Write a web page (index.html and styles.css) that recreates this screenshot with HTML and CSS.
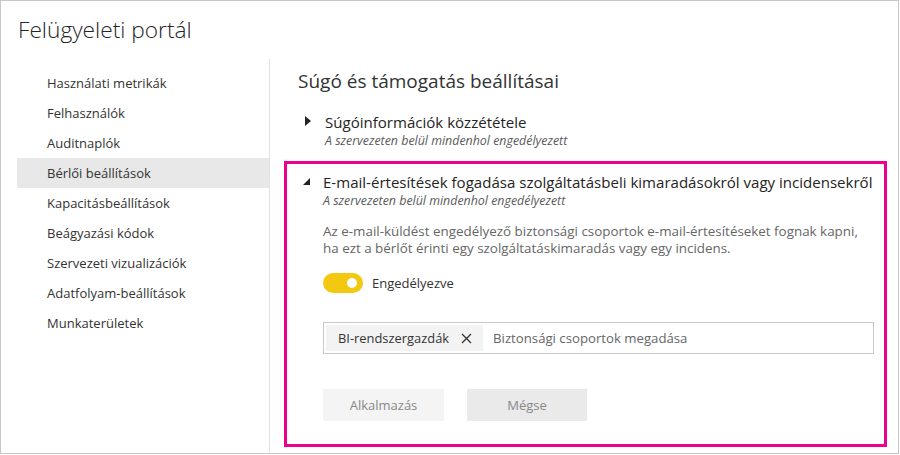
FILE: index.html
```html
<!DOCTYPE html>
<html lang="hu">
<head>
<meta charset="utf-8">
<title>Felügyeleti portál</title>
<link rel="stylesheet" href="styles.css">
</head>
<body>
<div class="frame">
  <header class="top">
    <h1 class="title">Felügyeleti portál</h1>
  </header>
  <div class="main">
    <nav class="nav">
      <div class="nav-item">Használati metrikák</div>
      <div class="nav-item">Felhasználók</div>
      <div class="nav-item">Auditnaplók</div>
      <div class="nav-item selected">Bérlői beállítások</div>
      <div class="nav-item">Kapacitásbeállítások</div>
      <div class="nav-item">Beágyazási kódok</div>
      <div class="nav-item">Szervezeti vizualizációk</div>
      <div class="nav-item">Adatfolyam-beállítások</div>
      <div class="nav-item">Munkaterületek</div>
    </nav>
    <section class="content">
      <h2 class="heading">Súgó és támogatás beállításai</h2>
      <div class="setting collapsed">
        <span class="caret">
          <svg width="6" height="10" viewBox="0 0 6 10"><path d="M0 0 L6 5 L0 10 Z" fill="#252423"/></svg>
        </span>
        <div class="setting-body">
          <div class="setting-title">Súgóinformációk közzététele</div>
          <div class="setting-sub">A szervezeten belül mindenhol engedélyezett</div>
        </div>
      </div>
      <div class="setting expanded">
        <span class="caret">
          <svg width="7" height="7" viewBox="0 0 7 7"><path d="M7 0 L7 7 L0 7 Z" fill="#252423"/></svg>
        </span>
        <div class="setting-body">
          <div class="setting-title">E-mail-értesítések fogadása szolgáltatásbeli kimaradásokról vagy incidensekről</div>
          <div class="setting-sub">A szervezeten belül mindenhol engedélyezett</div>
          <p class="desc">Az e-mail-küldést engedélyező biztonsági csoportok e-mail-értesítéseket fognak kapni, ha ezt a bérlőt érinti egy szolgáltatáskimaradás vagy egy incidens.</p>
          <div class="toggle-row">
            <span class="toggle"><span class="knob"></span></span>
            <span class="toggle-label">Engedélyezve</span>
          </div>
          <div class="picker">
            <span class="chip">BI-rendszergazdák
              <svg class="chip-x" width="11" height="11" viewBox="0 0 11 11"><path d="M1 1 L10 10 M10 1 L1 10" stroke="#333" stroke-width="1.3" fill="none"/></svg>
            </span>
            <span class="placeholder">Biztonsági csoportok megadása</span>
          </div>
          <div class="buttons">
            <button class="btn apply">Alkalmazás</button>
            <button class="btn cancel">Mégse</button>
          </div>
        </div>
      </div>
    </section>
  </div>
</div>
</body>
</html>
```
FILE: styles.css
```css
* { box-sizing: border-box; }
html, body { margin: 0; padding: 0; background: #fff; }
body { font-family: "Open Sans", "Noto Sans", sans-serif; color: #333; }
.frame {
  width: 899px;
  height: 454px;
  border: 1px solid #c6c6c6;
  display: flex;
  flex-direction: column;
  overflow: hidden;
}
.top { height: 58px; padding-left: 17px; display: flex; align-items: center; }
.title { margin: 0; font-size: 22.7px; line-height: 30px; font-weight: 300; color: #252423; }
.main { flex: 1; display: flex; }
.nav {
  width: 253px;
  margin-left: 16px;
  border-right: 1px solid #e1e1e1;
  padding-top: 9px;
}
.nav-item {
  height: 30px;
  line-height: 30px;
  padding-left: 30px;
  font-size: 13px;
  color: #333;
}
.nav-item.selected { background: #e8e8e8; }
.content { flex: 1; padding-left: 14px; padding-top: 7px; }
.heading { margin: 0 0 0 14px; font-size: 19px; font-weight: 400; color: #333; height: 30px; line-height: 30px; }
.setting { display: grid; grid-template-columns: 20px 1fr; }
.caret { display: block; }
.caret svg { display: block; }
.setting.collapsed { margin-top: 16px; padding-left: 21px; }
.setting.collapsed .caret { padding-top: 4px; }
.setting.collapsed .setting-sub { margin-top: 1px; }
.setting.expanded {
  margin-top: 12px;
  border: 3px solid #ec008c;
  width: 603px;
  padding: 8px 0 0 16px;
  height: 286px;
}
.setting.expanded .caret { padding-top: 6px; }
.setting.expanded .setting-body { min-width: 0; }
.setting.expanded .setting-sub { margin-top: 1px; }
.setting-title { font-size: 15.05px; line-height: 20px; color: #252423; white-space: nowrap; }
.setting-sub { font-size: 12.4px; font-style: italic; color: #5a5a5a; line-height: 16px; }
.desc { margin: 14px 0 0; font-size: 13.4px; line-height: 17px; color: #666; width: 545px; }
.toggle-row { margin-top: 16px; display: flex; align-items: center; gap: 9px; height: 20px; }
.toggle { width: 40px; height: 20px; border-radius: 10px; background: #f2c811; position: relative; display: inline-block; }
.knob { position: absolute; right: 6px; top: 5px; width: 10px; height: 10px; border-radius: 50%; background: #fff; }
.toggle-label { font-size: 13px; color: #333; }
.picker {
  margin-top: 29px;
  width: 551px;
  height: 32px;
  border: 1px solid #c8c8c8;
  display: flex;
  align-items: center;
  padding: 2px;
}
.chip {
  height: 26px;
  background: #f3f3f3;
  display: flex;
  align-items: center;
  padding: 0 11px 0 12px;
  font-size: 12.9px;
  color: #333;
  gap: 12px;
}
.chip-x { display: block; }
.placeholder { margin-left: 10px; font-size: 13.2px; color: #666; }
.buttons { margin-top: 35px; display: flex; gap: 23px; }
.btn {
  width: 121px;
  height: 32px;
  border: 0;
  font-family: inherit;
  font-size: 13px;
  color: #888;
  padding: 0;
}
.btn.apply { background: #f4f4f4; }
.btn.cancel { background: #eaeaea; width: 120px; }
```
